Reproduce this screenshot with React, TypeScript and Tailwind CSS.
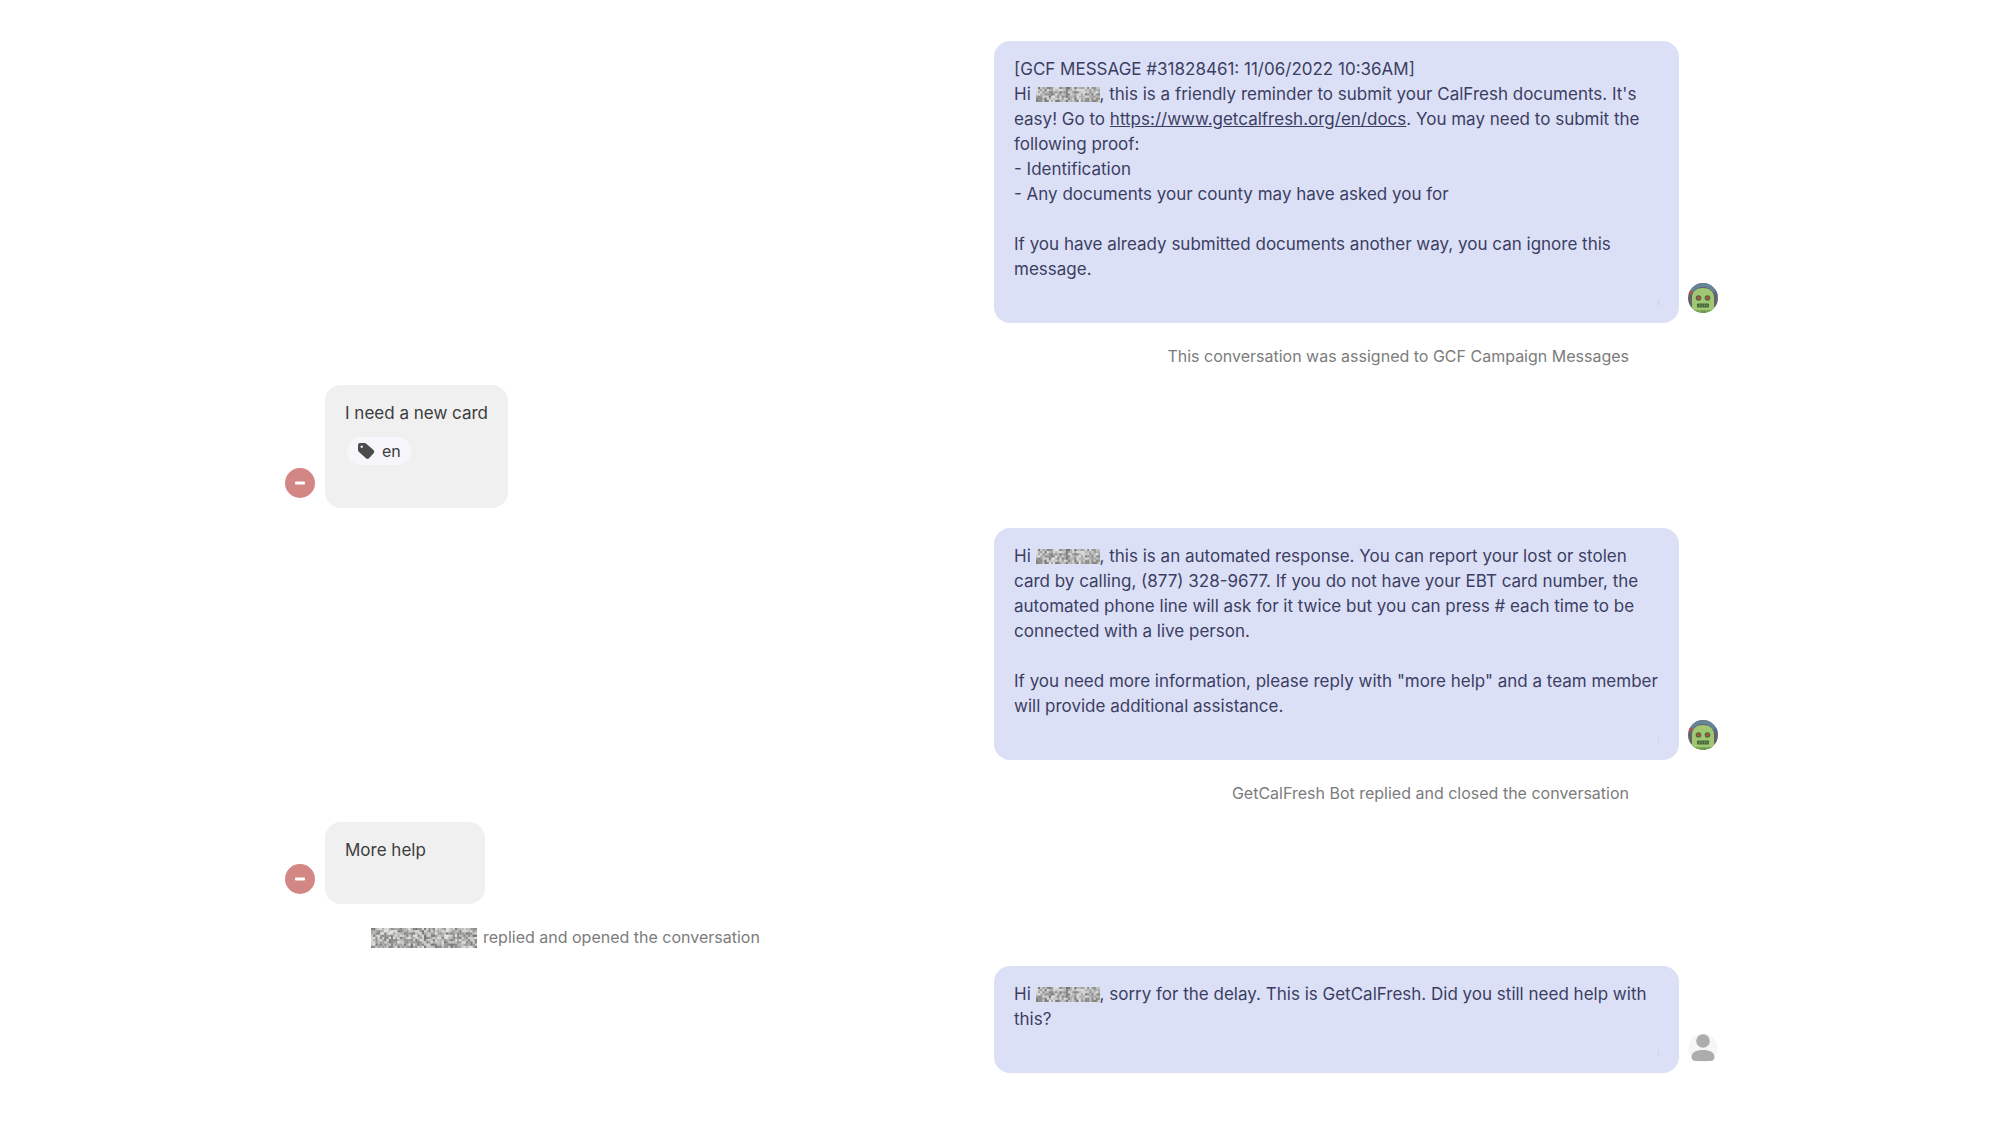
import type { ReactNode } from 'react'

// Pixelated block that hides a person's name
function Redacted({ cols, rows, seed, className }: { cols: number; rows: number; seed: number; className: string }) {
  const cells = []
  let state = seed
  for (let y = 0; y < rows; y++) {
    for (let x = 0; x < cols; x++) {
      state = (state * 48271) % 2147483647
      const shade = 115 + Math.floor((state / 2147483647) * 115)
      cells.push(
        <rect key={`${x}-${y}`} x={x} y={y} width={1.1} height={1.1} fill={`rgb(${shade},${shade},${shade - 2})`} />,
      )
    }
  }
  return (
    <svg viewBox={`0 0 ${cols} ${rows}`} preserveAspectRatio="none" className={className} aria-label="Redacted name">
      {cells}
    </svg>
  )
}

function ClientName() {
  return <Redacted cols={30} rows={7} seed={918273645} className="inline-block h-[15px] w-16 align-[-2px]" />
}

function BotAvatar() {
  return (
    <svg viewBox="0 0 30 30" className="size-[30px] shrink-0" aria-label="GetCalFresh Bot">
      <clipPath id="bot-clip">
        <circle cx="15" cy="15" r="15" />
      </clipPath>
      <g clipPath="url(#bot-clip)">
        <rect width="30" height="30" fill="#66626c" />
        <path d="M2 9 Q6 0 15 0 T28 9 L25 9 Q21 4 15 4 T5 9Z" fill="#64859a" />
        <path d="M0 8 H4 V11 H0Z" fill="#c0504a" />
        <path d="M27 8 H30 V12 H27Z" fill="#4d6c9a" />
        <path d="M4 30 V15 C4 8 9 5 15 5 S26 8 26 15 V30Z" fill="#a0c872" />
        <path d="M4 27 H26 V30 H4Z" fill="#76a556" />
        <circle cx="10.5" cy="15" r="2.8" fill="#4e6b3f" />
        <circle cx="19.5" cy="15" r="2.8" fill="#4e6b3f" />
        <circle cx="10.5" cy="15" r="1.5" fill="#c4494b" />
        <circle cx="19.5" cy="15" r="1.5" fill="#c4494b" />
        <rect x="9" y="20.5" width="12" height="4" rx="0.8" fill="#47663c" />
        <path d="M11.5 21.5v2M14 21.5v2M16.5 21.5v2M19 21.5v2" stroke="#8bb564" strokeWidth="0.7" />
        <path d="M14 29h0.8M16 29h0.8" stroke="#3f5a35" />
      </g>
    </svg>
  )
}

function PersonAvatar() {
  return (
    <svg viewBox="0 0 30 30" className="size-[30px] shrink-0" aria-label="Team member">
      <circle cx="15" cy="15" r="14.5" fill="#f6f6f8" />
      <circle cx="15" cy="8" r="6.8" fill="#adadad" />
      <path d="M3.5 24 C3.5 19.5 8 17 15 17 S26.5 19.5 26.5 24 Q26.5 28 22 28 H8 Q3.5 28 3.5 24Z" fill="#adadad" />
    </svg>
  )
}

function ClientAvatar() {
  return (
    <svg viewBox="0 0 30 30" className="size-[30px] shrink-0" aria-label="Client">
      <circle cx="15" cy="15" r="15" fill="#d38784" />
      <rect x="10" y="13.5" width="10" height="3" rx="1" fill="#fff" />
    </svg>
  )
}

function TagIcon() {
  return (
    <svg viewBox="0 0 18 18" className="size-[18px] shrink-0" aria-hidden="true">
      <path
        fillRule="evenodd"
        d="M3 1 H7.5 Q8.500 1 9.300 1.700 L16.500 8 Q18 9.500 16.800 11 L12 16.300 Q10.500 17.700 9 16.300 L2 10 Q1 9 1 8 V3 Q1 1 3 1Z M4.700 3.500 a1.200 1.200 0 1 0 0.010 0Z"
        fill="#4b4b4b"
      />
    </svg>
  )
}

function Outgoing({ avatar, children }: { avatar: ReactNode; children: ReactNode }) {
  return (
    <div className="flex items-end justify-end gap-[9px]">
      <div className="w-[685px] rounded-2xl bg-[#dce0f6] px-5 pt-4 text-[#3b3e63]">
        {children}
        <div className="flex h-[41px] items-center justify-end">
          <span className="h-[6px] w-px bg-[#cdd1e8]" />
        </div>
      </div>
      <div className="pb-[10px]">{avatar}</div>
    </div>
  )
}

function Incoming({ children }: { children: ReactNode }) {
  return (
    <div className="flex items-end gap-[10px]">
      <div className="pb-[10px]">
        <ClientAvatar />
      </div>
      <div className="min-w-40 rounded-2xl bg-[#f0f0f0] px-5 pt-4 pb-[41px] text-[#3c3c3c]">{children}</div>
    </div>
  )
}

export default function App() {
  return (
    <main className="min-h-screen bg-white pt-[41px] pr-[282px] pb-12 pl-[285px] font-['Inter',sans-serif] text-[17px] leading-[25px]">
      <Outgoing avatar={<BotAvatar />}>
        <p>
          [GCF MESSAGE #31828461: 11/06/2022 10:36AM]
          <br />
          Hi <ClientName />, this is a friendly reminder to submit your CalFresh documents. It's
          <br />
          easy! Go to{' '}
          <a href="https://www.getcalfresh.org/en/docs" className="underline">
            https://www.getcalfresh.org/en/docs
          </a>
          . You may need to submit the
          <br />
          following proof:
          <br />
          - Identification
          <br />- Any documents your county may have asked you for
        </p>
        <p className="pt-[25px]">
          If you have already submitted documents another way, you can ignore this
          <br />
          message.
        </p>
      </Outgoing>

      <p className="pt-[21px] pr-[89px] pb-4 text-right text-base leading-[25px] text-[#7c7c7c]">
        This conversation was assigned to GCF Campaign Messages
      </p>

      <Incoming>
        <p>I need a new card</p>
        <div className="flex pt-[11px] pb-[2px] pl-[2px]">
          <span className="flex h-7 items-center gap-[7px] rounded-full bg-[#f6f6fb] px-[10px] text-base">
            <TagIcon />
            en
          </span>
        </div>
      </Incoming>

      <div className="pt-5">
        <Outgoing avatar={<BotAvatar />}>
          <p>
            Hi <ClientName />, this is an automated response. You can report your lost or stolen
            <br />
            card by calling, (877) 328-9677. If you do not have your EBT card number, the
            <br />
            automated phone line will ask for it twice but you can press # each time to be
            <br />
            connected with a live person.
          </p>
          <p className="pt-[25px]">
            If you need more information, please reply with "more help" and a team member
            <br />
            will provide additional assistance.
          </p>
        </Outgoing>
      </div>

      <p className="pt-[21px] pr-[89px] pb-4 text-right text-base leading-[25px] text-[#7c7c7c]">
        GetCalFresh Bot replied and closed the conversation
      </p>

      <Incoming>
        <p>More help</p>
      </Incoming>

      <p className="flex items-center gap-[6px] pt-[21px] pb-4 pl-[86px] text-base leading-[25px] text-[#7c7c7c]">
        <Redacted cols={48} rows={9} seed={564738291} className="h-5 w-[106px]" />
        replied and opened the conversation
      </p>

      <Outgoing avatar={<PersonAvatar />}>
        <p>
          Hi <ClientName />, sorry for the delay. This is GetCalFresh. Did you still need help with
          <br />
          this?
        </p>
      </Outgoing>
    </main>
  )
}
